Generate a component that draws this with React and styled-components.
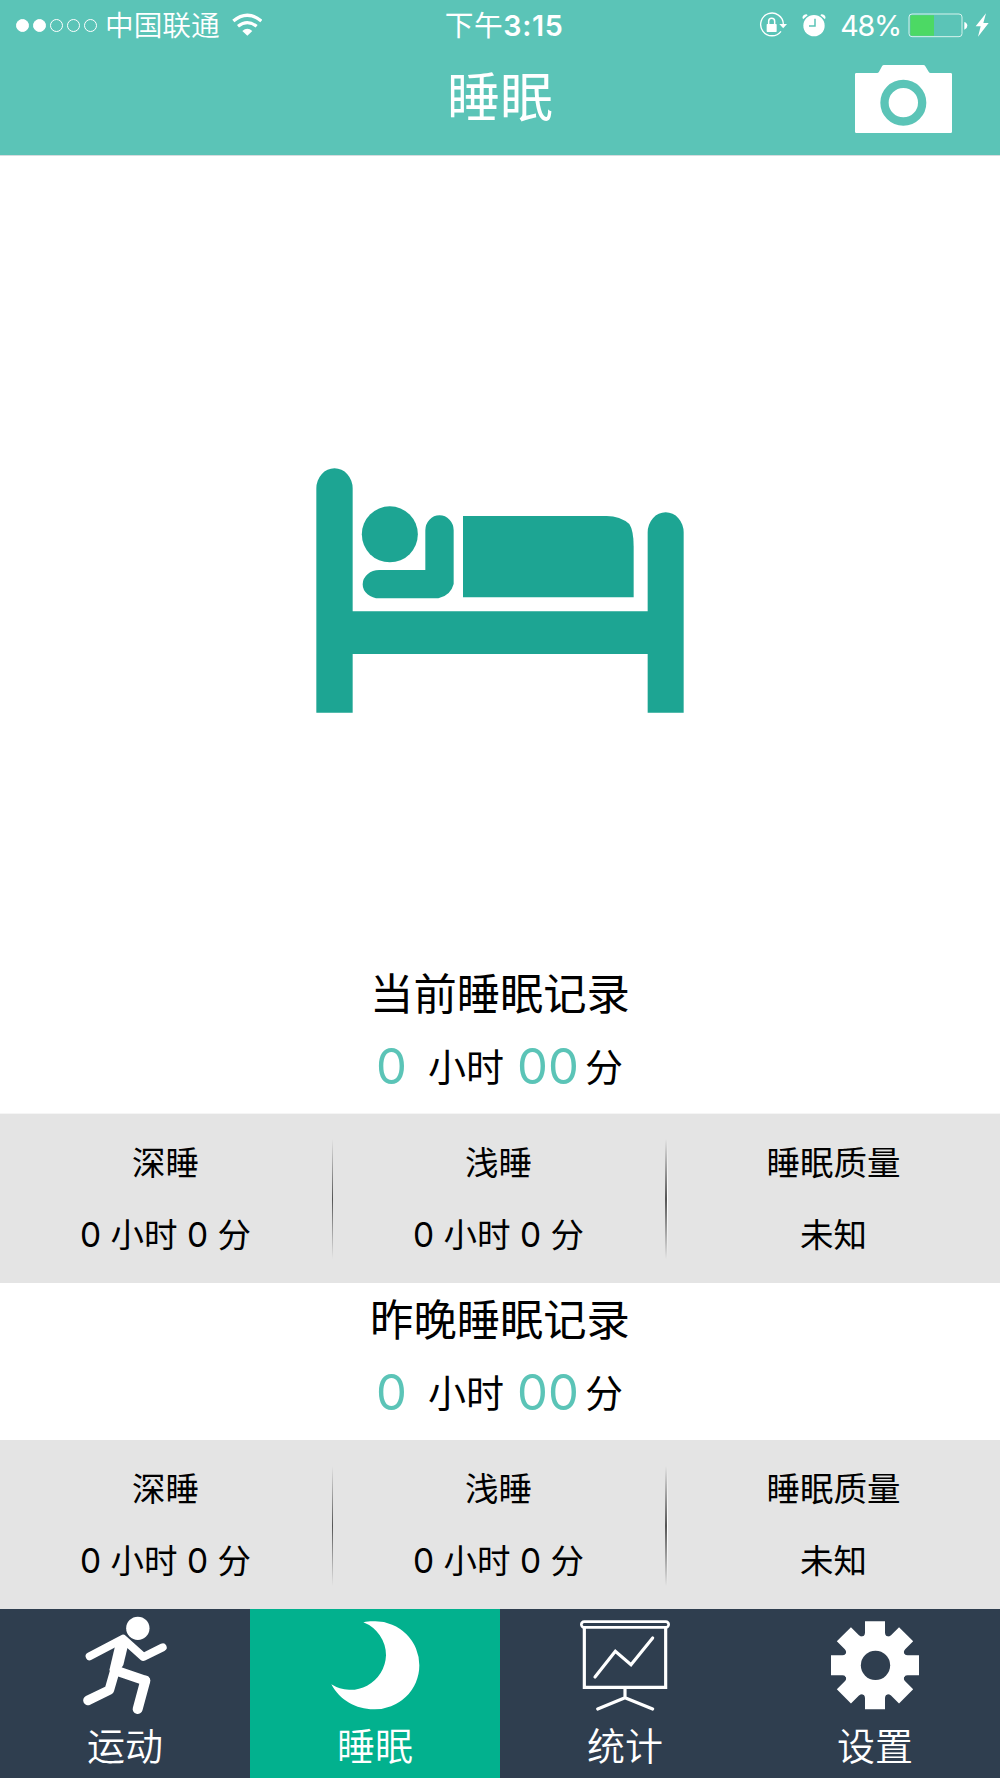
import React from 'react';
import styled, { createGlobalStyle } from 'styled-components';

const GlobalStyle = createGlobalStyle`
  * { box-sizing: border-box; }
  body {
    margin: 0;
    background: #fff;
    font-family: Inter, 'Noto Sans CJK SC', sans-serif;
    font-weight: 400;
    -webkit-font-smoothing: antialiased;
  }
  svg { display: block; flex: none; }
`;

const Screen = styled.div`
  width: 1000px;
  height: 1778px;
  display: flex;
  flex-direction: column;
  overflow: hidden;
  background: #fff;
  color: #000;
`;

const Header = styled.header`
  height: 156px;
  background: #5bc4b7;
  border-bottom: 1px solid #d6dcdf;
  color: #fff;
`;

const StatusBar = styled.div`
  height: 50px;
  display: grid;
  grid-template-columns: 440px 128px 1fr;
  align-items: center;
  font-size: 28.7px;
  line-height: 48px;
  white-space: nowrap;
`;

const Carrier = styled.div`
  display: flex;
  align-items: center;
  padding-left: 16px;
`;

const Signal = styled.div`
  display: flex;
  gap: 4px;
  margin-right: 8px;
`;

const Dot = styled.i`
  width: 13px;
  height: 13px;
  border-radius: 50%;
  border: 1px solid #fff;
  background: ${(p) => (p.$on ? '#fff' : 'transparent')};
`;

const CarrierName = styled.span`
  margin-right: 12px;
  padding-top: 2px;
  font-weight: 350;
`;

const Clock = styled.div`
  padding-top: 2px;
  text-align: center;
  font-weight: 600;
  letter-spacing: 0.6px;
`;

const ClockPeriod = styled.span`
  font-weight: 400;
`;

const StatusRight = styled.div`
  display: flex;
  align-items: center;
  justify-content: flex-end;
  padding-right: 11px;
`;

const Percent = styled.span`
  padding-top: 2px;
  letter-spacing: -1.2px;
  margin: 0 7px 0 14px;
`;

const StatusIcons = styled.div`
  display: flex;
  gap: ${(p) => p.$gap}px;
`;

const TitleBar = styled.div`
  height: 105px;
  display: grid;
  grid-template-columns: 1fr auto 1fr;
  align-items: start;
`;

const Title = styled.h1`
  grid-column: 2;
  margin: 18px 0 0;
  font-size: 53px;
  line-height: 60px;
  font-weight: 400;
`;

const CameraButton = styled.button`
  grid-column: 3;
  justify-self: end;
  margin: 15px 48px 0 0;
  padding: 0;
  border: 0;
  background: none;
`;

const Hero = styled.section`
  height: 801px;
  display: flex;
  justify-content: center;
  align-items: flex-start;
  padding-top: 312px;
`;

const Summary = styled.section`
  height: ${(p) => p.$height}px;
  padding-top: 7px;
  display: flex;
  flex-direction: column;
  align-items: center;
  gap: 13px;
`;

const SummaryTitle = styled.h2`
  margin: 0;
  font-size: 43.3px;
  line-height: 60px;
  font-weight: 400;
`;

const Duration = styled.div`
  display: flex;
  align-items: center;
  padding-right: 1px;
  font-size: 38px;
  line-height: 60px;
`;

const Digits = styled.span`
  font-size: 49px;
  color: #5bc4b7;
  margin: 0 ${(p) => p.$after}px 0 ${(p) => p.$before}px;
`;

const Panel = styled.section`
  height: ${(p) => p.$height}px;
  display: flex;
  background: #e4e4e4;
  border-top: 1px solid ${(p) => p.$edge};
`;

const Cell = styled.div`
  width: 332px;
  padding: ${(p) => p.$top}px 1px 0 0;
  display: flex;
  flex-direction: column;
  align-items: center;
  gap: 22px;
  font-size: 33.5px;
  line-height: 50px;
  white-space: nowrap;
`;

const Divider = styled.div`
  width: ${(p) => (p.$wide ? 3 : 1)}px;
  height: 120px;
  margin-top: 25px;
  display: flex;

  &::before {
    content: '';
    width: ${(p) => (p.$wide ? 2 : 1)}px;
    background: linear-gradient(rgba(70, 70, 70, 0), #555 50%, rgba(70, 70, 70, 0));
  }
  &::after {
    content: '';
    width: ${(p) => (p.$wide ? 1 : 0)}px;
    background: linear-gradient(rgba(255, 255, 255, 0), #fff 50%, rgba(255, 255, 255, 0));
  }
`;

const TabBar = styled.nav`
  height: 169px;
  display: grid;
  grid-template-columns: repeat(4, 250px);
`;

const Tab = styled.a`
  display: flex;
  flex-direction: column;
  align-items: center;
  background: ${(p) => (p.$active ? '#02b18e' : '#2f3e4f')};
  color: #fff;
`;

const TabLabel = styled.span`
  margin-top: -6px;
  font-size: 38px;
  line-height: 50px;
  font-weight: 350;
`;

const WifiIcon = () => (
  <svg width="30" height="24" viewBox="695 36 90 72" fill="none" stroke="#fff">
    <path d="M699 60Q741 25 783 60" strokeWidth="10" />
    <path d="M713 76Q741 54 769 76" strokeWidth="9.500" />
    <path d="M726 90Q741 77 756 90L741 104Z" fill="#fff" stroke="none" />
  </svg>
);

const RotationLockIcon = () => (
  <svg width="28" height="26" viewBox="58 34 84 78" fill="none" stroke="#fff" strokeWidth="4">
    <path d="M124 92A34 34 0 1 1 131 70" />
    <path d="M119 70H142L130.500 83Z" fill="#fff" stroke="none" />
    <rect x="81" y="70" width="30" height="24" rx="2" fill="#fff" stroke="none" />
    <path d="M87 72V62a9 9 0 0 1 18 0V72" strokeWidth="4.500" />
  </svg>
);

const AlarmIcon = () => (
  <svg width="24" height="26" viewBox="188 34 72 78">
    <circle cx="224" cy="75" r="32" fill="#fff" />
    <path d="M191 56Q186 42 202 41L205 44Z" fill="#fff" />
    <path d="M257 56Q262 42 246 41L243 44Z" fill="#fff" />
    <path d="M227 54V76H209" fill="none" stroke="#5bc4b7" strokeWidth="4.500" />
  </svg>
);

const BatteryIcon = () => (
  <svg width="60" height="26" viewBox="503 34 180 78">
    <rect x="506" y="40" width="159" height="68" rx="9" fill="none" stroke="#d6f2ed" strokeWidth="3" />
    <path d="M581 44H514Q510 44 510 48V101Q510 105 514 105H581Z" fill="#4cd964" />
    <path d="M672 64Q681 67 681 75T672 87Z" fill="#fff" />
  </svg>
);

const BoltIcon = () => (
  <svg width="14" height="26" viewBox="703 34 42 78">
    <path d="M736 38L705 77H720L712 108L744 67H728Z" fill="#fff" />
  </svg>
);

const CameraIcon = () => (
  <svg width="97" height="68" viewBox="345 195 291 204">
    <path
      d="M349 219H411Q415 219 417 215L426 199Q428 195 432 195H550Q554 195 556 199L566 215Q568 219 572 219H632Q636 219 636 223V395Q636 399 632 399H349Q345 399 345 395V223Q345 219 349 219Z"
      fill="#fff"
    />
    <circle cx="490" cy="308" r="56.500" fill="none" stroke="#5bc4b7" strokeWidth="25" />
  </svg>
);

const BedIcon = () => (
  <svg width="368" height="245" viewBox="48 54 1104 735" fill="#1da593">
    <path d="M49 788V115A54.500 60 0 0 1 158 115V484H1043V247A54 60 0 0 1 1151 247V788H1043V612H158V788Z" />
    <circle cx="269.500" cy="253" r="84" />
    <path d="M376 360V241A42.500 45 0 0 1 461 241V402Q452 437 415 445H238A50 42.500 0 0 1 238 360Z" />
    <path d="M489 198H920Q960 198 988 222Q1001 242 1001 290V442H489Z" />
  </svg>
);

const RunnerIcon = () => (
  <svg width="250" height="118" viewBox="0 26 750 354" fill="none" stroke="#fff" strokeLinecap="round" strokeLinejoin="round">
    <circle cx="413.500" cy="84" r="35" fill="#fff" stroke="none" />
    <path d="M269 168L369 115L430 170L488 141" strokeWidth="24" />
    <path d="M345 138L370 112L383 140L370 194L350 225L328 210Z" fill="#fff" stroke="none" />
    <path d="M346 210L436 241" strokeWidth="29" />
    <path d="M436 241L413 326" strokeWidth="30" />
    <path d="M345 210L328 269L264 300" strokeWidth="29" />
  </svg>
);

const MoonIcon = () => (
  <svg width="250" height="118" viewBox="750 26 750 354">
    <path
      d="M1090 66C1105 62 1118 63 1126 63A132 132 0 0 1 1258 195A134 132 0 0 1 1121 327C1068 327 1020 300 994 252A107 107 0 0 0 1158 165A107 107 0 0 0 1090 66Z"
      fill="#fff"
    />
  </svg>
);

const ChartIcon = () => (
  <svg width="250" height="118" viewBox="0 26 750 354" fill="none" stroke="#fff" strokeWidth="9.500" strokeLinecap="round">
    <rect x="244" y="64" width="262" height="17" rx="8.500" strokeWidth="8" />
    <path d="M253 84V261H497V84" />
    <path d="M285 230L346 153L393 193L458 113" />
    <path d="M375 264V292M293 326L375 292L458 326" />
  </svg>
);

const GearIcon = () => (
  <svg width="250" height="118" viewBox="750 26 750 354">
    <g transform="translate(1125 195)">
      {[0, 45, 90, 135, 180, 225, 270, 315].map((angle) => (
        <path
          key={angle}
          transform={`rotate(${angle})`}
          d="M-30-132H30V-98Q31-86 41-86L0 0L-41-86Q-31-86-30-98Z"
          fill="#fff"
        />
      ))}
      <circle r="60" fill="#fff" />
      <circle cx="1.500" r="44" fill="#2f3e4f" />
    </g>
  </svg>
);

const tabs = [
  { label: '运动', Icon: RunnerIcon },
  { label: '睡眠', Icon: MoonIcon, active: true },
  { label: '统计', Icon: ChartIcon },
  { label: '设置', Icon: GearIcon },
];

function SleepRecord({ title, height, panelHeight, cellTop, edge }) {
  return (
    <>
      <Summary $height={height}>
        <SummaryTitle>{title}</SummaryTitle>
        <Duration>
          <Digits $before={0} $after={21}>0</Digits>
          <span>小时</span>
          <Digits $before={13} $after={6}>00</Digits>
          <span>分</span>
        </Duration>
      </Summary>
      <Panel $height={panelHeight} $edge={edge}>
        <Cell $top={cellTop}>
          <span>深睡</span>
          <span>0 小时 0 分</span>
        </Cell>
        <Divider />
        <Cell $top={cellTop}>
          <span>浅睡</span>
          <span>0 小时 0 分</span>
        </Cell>
        <Divider $wide />
        <Cell $top={cellTop}>
          <span>睡眠质量</span>
          <span>未知</span>
        </Cell>
      </Panel>
    </>
  );
}

export default function App() {
  return (
    <Screen>
      <GlobalStyle />
      <Header>
        <StatusBar>
          <Carrier>
            <Signal>
              {[1, 1, 0, 0, 0].map((on, i) => (
                <Dot key={i} $on={on} />
              ))}
            </Signal>
            <CarrierName>中国联通</CarrierName>
            <WifiIcon />
          </Carrier>
          <Clock>
            <ClockPeriod>下午</ClockPeriod>3:15
          </Clock>
          <StatusRight>
            <StatusIcons $gap={15}>
              <RotationLockIcon />
              <AlarmIcon />
            </StatusIcons>
            <Percent>48%</Percent>
            <StatusIcons $gap={7}>
              <BatteryIcon />
              <BoltIcon />
            </StatusIcons>
          </StatusRight>
        </StatusBar>
        <TitleBar>
          <Title>睡眠</Title>
          <CameraButton aria-label="相机">
            <CameraIcon />
          </CameraButton>
        </TitleBar>
      </Header>
      <Hero>
        <BedIcon />
      </Hero>
      <SleepRecord title="当前睡眠记录" height={156} panelHeight={170} cellTop={24} edge="#f5f5f5" />
      <SleepRecord title="昨晚睡眠记录" height={157} panelHeight={169} cellTop={23} edge="#e4e4e4" />
      <TabBar>
        {tabs.map(({ label, Icon, active }) => (
          <Tab key={label} $active={active}>
            <Icon />
            <TabLabel>{label}</TabLabel>
          </Tab>
        ))}
      </TabBar>
    </Screen>
  );
}
